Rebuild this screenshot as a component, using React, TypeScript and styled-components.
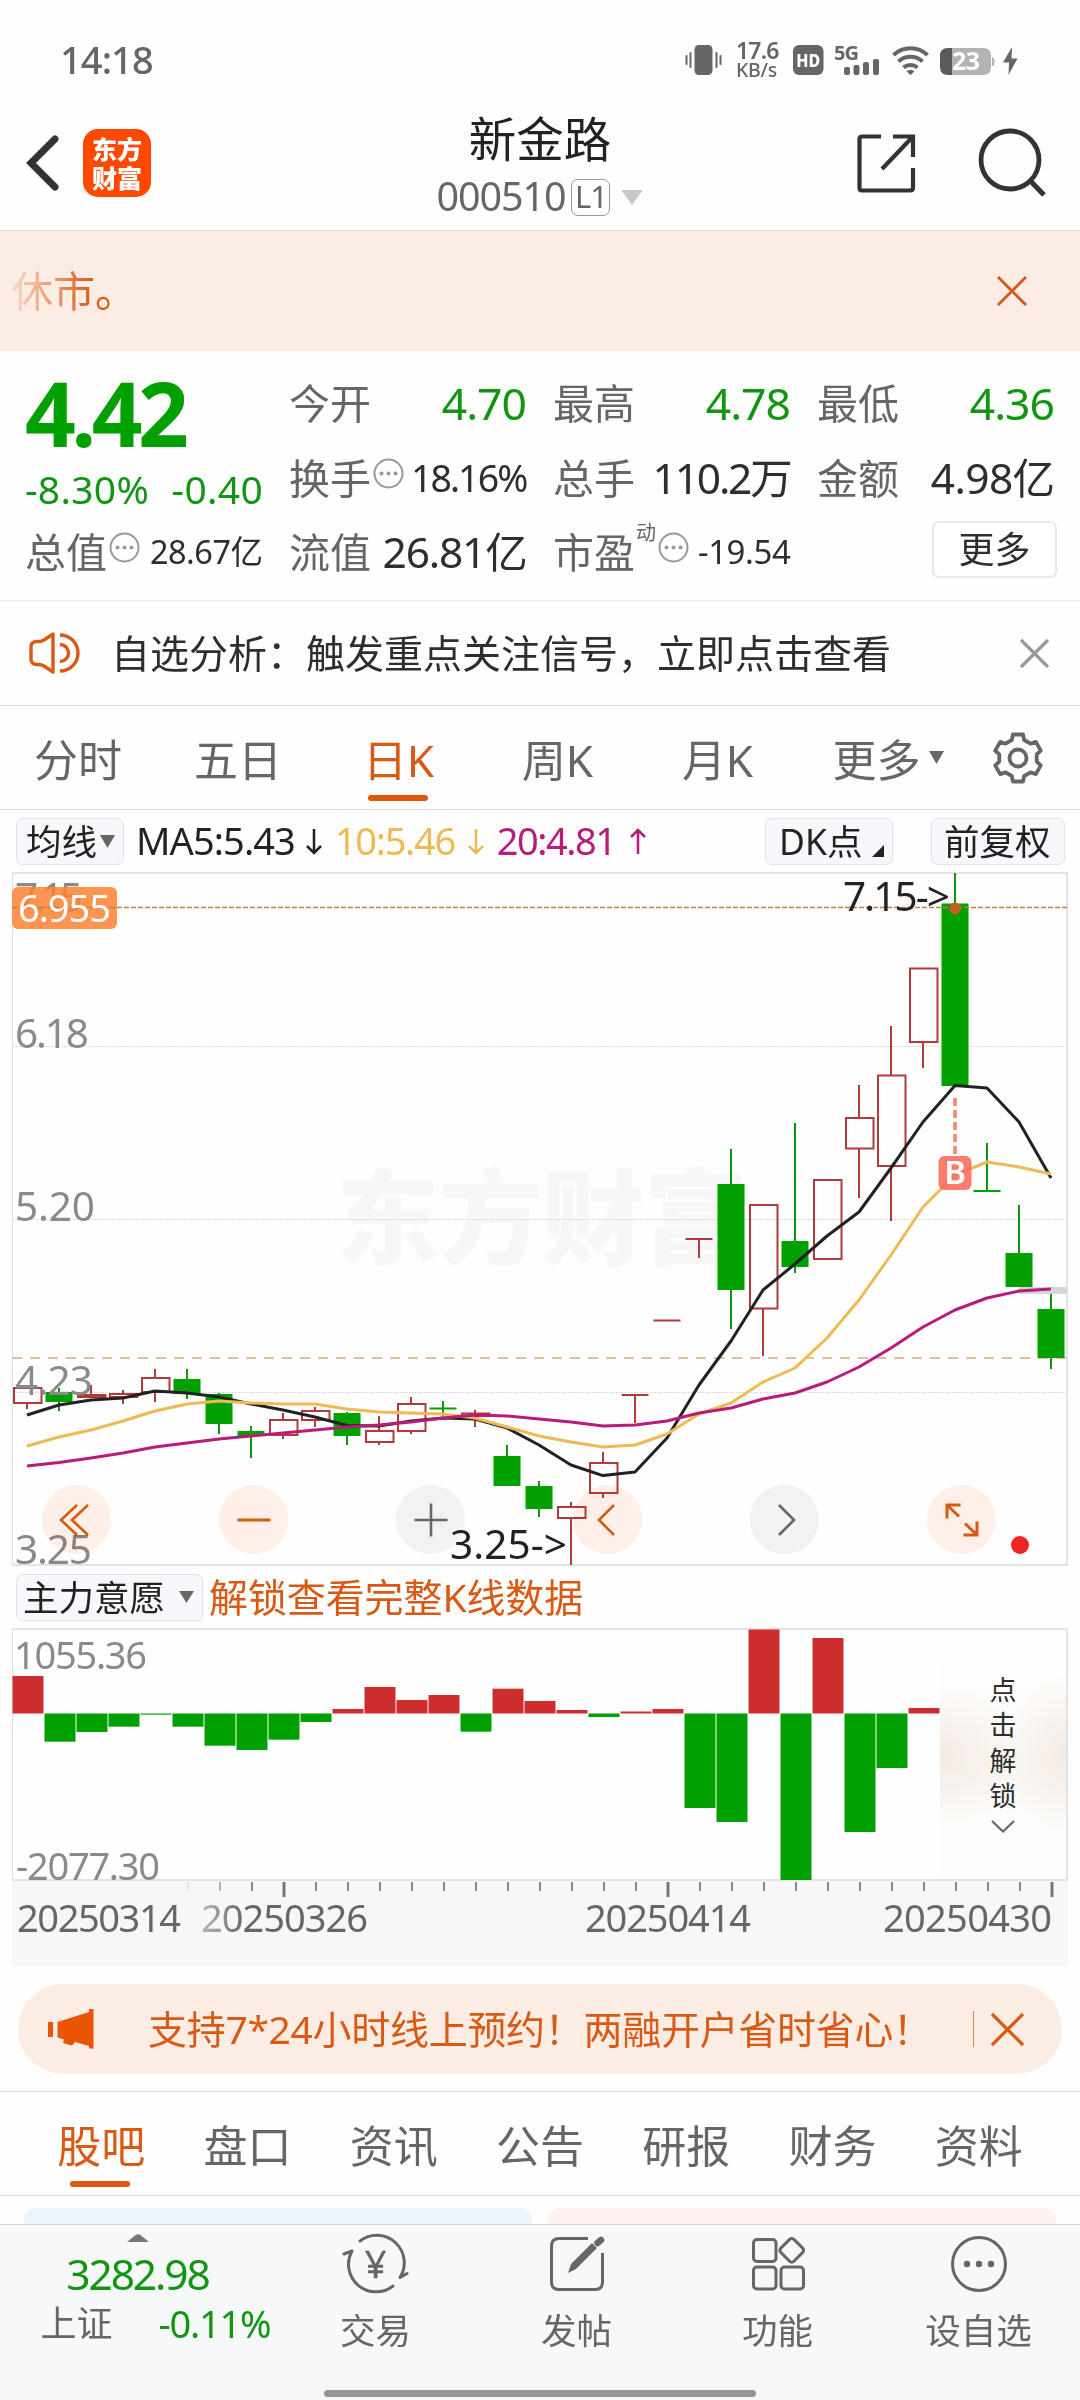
import React from "react";
import styled, { createGlobalStyle } from "styled-components";

const SANS = `"Noto Sans", "Noto Sans CJK SC", sans-serif`;
const C = {
  ink: "#2e2e2e",
  gray: "#666",
  light: "#8a8a8a",
  green: "#129612",
  candle: "#00a000",
  red: "#b23a3a",
  bar: "#ce2d2d",
  orange: "#d85a14",
  peach: "#fcede4",
  line: "#d9d9d9",
  ma5: "#222",
  ma10: "#efb954",
  ma20: "#b81c78",
};

const Global = createGlobalStyle`
  * { box-sizing: border-box; }
  body { margin: 0; background: #fff; }
`;

const Page = styled.div`
  width: 1080px;
  height: 2400px;
  overflow: hidden;
  display: flex;
  flex-direction: column;
  background: #fefefe;
  font-family: ${SANS};
  color: ${C.ink};
  white-space: nowrap;
`;

const Txt = styled.span<{ $s: number; $c?: string; $t?: number; $w?: number; $ml?: number }>`
  font-size: ${(p) => p.$s}px;
  line-height: 1.2;
  color: ${(p) => p.$c ?? C.ink};
  letter-spacing: ${(p) => p.$t ?? 0}px;
  font-weight: ${(p) => p.$w ?? 400};
  margin-left: ${(p) => p.$ml ?? 0}px;
`;

const Icon = styled.svg<{ $ml?: number; $mt?: number }>`
  display: block;
  flex: none;
  overflow: visible;
  margin-left: ${(p) => p.$ml ?? 0}px;
  margin-top: ${(p) => p.$mt ?? 0}px;
  fill: none;
`;

/* ---------- status bar ---------- */
const StatusBar = styled.div`
  height: 80px;
  flex: none;
  padding: 40px 62px 0 60px;
  display: flex;
  align-items: center;
  justify-content: space-between;
`;
const StatusIcons = styled.div`
  display: flex;
  align-items: center;
  height: 40px;
`;
const Speed = styled.div`
  display: flex;
  flex-direction: column;
  width: 57px;
  padding-left: 14px;
  color: ${C.gray};
  font-size: 23px;
  line-height: 19px;
  font-weight: 600;
  letter-spacing: -0.8px;
  small {
    font-size: 19.5px;
    font-weight: 500;
    letter-spacing: -0.3px;
  }
`;

/* ---------- header ---------- */
const Header = styled.header`
  height: 151px;
  flex: none;
  padding-top: 16px;
  border-bottom: 1px solid ${C.line};
  display: grid;
  grid-template-columns: 1fr auto 1fr;
  align-items: center;
`;
const HeaderSide = styled.div<{ $end?: boolean }>`
  display: flex;
  align-items: center;
  justify-content: ${(p) => (p.$end ? "flex-end" : "flex-start")};
  padding: ${(p) => (p.$end ? "0 32px 0 0" : "0 0 0 26px")};
`;
const Logo = styled.div`
  width: 68px;
  height: 68px;
  margin-left: 23px;
  border-radius: 15px;
  background: #ff4800;
  color: #fff;
  font: 900 25px/29px "Noto Sans CJK SC", sans-serif;
  display: flex;
  flex-direction: column;
  align-items: center;
  justify-content: center;
`;
const TitleBlock = styled.div`
  display: flex;
  flex-direction: column;
  align-items: center;
  gap: 12px;
`;
const Title = styled.div`
  font-size: 47.5px;
  line-height: 56px;
  color: #222;
`;
const CodeRow = styled.div`
  display: flex;
  align-items: center;
  height: 37px;
`;
const Level = styled.span`
  width: 39px;
  height: 37px;
  margin: 0 11px 0 6px;
  border: 1.5px solid #999;
  border-radius: 7px;
  color: ${C.gray};
  font-size: 31px;
  line-height: 33px;
  letter-spacing: -1px;
  text-align: center;
`;

/* ---------- banner ---------- */
const Banner = styled.div`
  height: 120px;
  flex: none;
  background: ${C.peach};
  display: flex;
  align-items: center;
  justify-content: space-between;
  padding: 0 53px 0 11px;
`;
const FadingText = styled.span`
  font-size: 42px;
  line-height: 60px;
  background: linear-gradient(90deg, rgba(216, 90, 20, 0.12) 0, #d85a14 84px);
  background-clip: text;
  -webkit-background-clip: text;
  color: transparent;
`;

/* ---------- quote ---------- */
const Quote = styled.section`
  height: 250px;
  flex: none;
  padding: 15px 25px 0;
  border-bottom: 1px solid #ebebeb;
  display: grid;
  grid-template-columns: repeat(4, 238px);
  grid-template-rows: repeat(3, 74.5px);
  column-gap: 26px;
`;
const PriceCell = styled.div`
  grid-row: span 2;
  display: flex;
  flex-direction: column;
`;
const Price = styled.div`
  font-size: 89px;
  font-weight: 700;
  line-height: 93px;
  letter-spacing: -4.6px;
  color: #00a000;
`;
const ChangeRow = styled.div`
  display: flex;
  justify-content: space-between;
  padding-top: 7px;
`;
const Cell = styled.div`
  display: flex;
  align-items: center;
`;
const Label = styled.span`
  font-size: 41px;
  line-height: 50px;
  color: ${C.gray};
`;
const Value = styled.span<{ $s: number; $t: number; $c?: string }>`
  margin-left: auto;
  font-size: ${(p) => p.$s}px;
  line-height: 50px;
  letter-spacing: ${(p) => p.$t}px;
  margin-right: ${(p) => (p.$s > 44 ? 1 : 0.5)}px;
  color: ${(p) => p.$c ?? C.ink};
`;
const Sup = styled.span`
  font-size: 20px;
  line-height: 24px;
  color: ${C.gray};
  align-self: flex-start;
  margin: 6px 0 0 1px;
`;
const MoreButton = styled.button`
  width: 125px;
  height: 57px;
  margin-left: auto;
  margin-right: -2px;
  margin-top: -5px;
  border: 2px solid #e6e8ea;
  border-radius: 7px;
  background: #fff;
  color: ${C.ink};
  font: 36px/48px ${SANS};
  padding: 0;
`;

const Tip = styled.section`
  height: 105px;
  flex: none;
  border-bottom: 1px solid ${C.line};
  display: flex;
  align-items: center;
  padding: 0 31px 0 29px;
`;
const Push = styled.div`
  margin-left: auto;
`;

/* ---------- tabs ---------- */
const PeriodTabs = styled.nav`
  height: 104px;
  flex: none;
  border-bottom: 1px solid ${C.line};
  display: flex;
  align-items: center;
`;
const Tab = styled.div<{ $w: number; $on?: boolean; $shift?: number }>`
  width: ${(p) => p.$w}px;
  height: 100%;
  position: relative;
  display: flex;
  align-items: center;
  justify-content: center;
  padding-right: ${(p) => p.$shift ?? 0}px;
  font-size: 44px;
  color: ${(p) => (p.$on ? C.orange : C.gray)};
  &::after {
    content: "";
    display: ${(p) => (p.$on ? "block" : "none")};
    position: absolute;
    bottom: 8px;
    left: calc(50% - 31px);
    width: 60px;
    height: 6px;
    border-radius: 3px;
    background: #e0580f;
  }
`;

/* ---------- indicator rows ---------- */
const Row = styled.div`
  height: 62px;
  flex: none;
  display: flex;
  align-items: center;
  padding: 0 15px 0 16px;
`;
const Chip = styled.div<{ $w: number; $pl?: number }>`
  width: ${(p) => p.$w}px;
  height: 47px;
  flex: none;
  padding-left: ${(p) => p.$pl ?? 9}px;
  display: flex;
  align-items: center;
  border: 1.5px solid #dfe2e6;
  border-radius: 7px;
  background: #f7f8fb;
  font-size: 35.5px;
  line-height: 42px;
  color: #222;
`;
const ChipGroup = styled.div`
  margin-left: auto;
  display: flex;
  gap: 38px;
`;

/* ---------- chart ---------- */
const ChartBox = styled.div`
  position: relative;
  flex: none;
  svg {
    display: block;
  }
`;
const Controls = styled.div`
  position: absolute;
  left: 42px;
  top: 613px;
  display: flex;
  gap: 108px;
`;
const Round = styled.div<{ $off?: boolean }>`
  width: 69px;
  height: 69px;
  border-radius: 50%;
  display: flex;
  align-items: center;
  justify-content: center;
  background: ${(p) => (p.$off ? "#f3f3f3" : "#fff1e9")};
  mix-blend-mode: multiply;
`;
const Unlock = styled.div`
  position: absolute;
  left: 940px;
  top: 3px;
  width: 126px;
  height: 248px;
  padding-top: 41px;
  display: flex;
  flex-direction: column;
  align-items: center;
  font-size: 27px;
  line-height: 35.3px;
  color: ${C.ink};
  background: radial-gradient(ellipse 80px 70px at 0 50%, #f5ebe5 0, rgba(245, 235, 229, 0) 100%),
    radial-gradient(ellipse 60px 80px at 100% 50%, #f5ebe5 0, rgba(245, 235, 229, 0) 100%),
    linear-gradient(#fefefe, #fdfcfa 30%, #f9f7f3 55%, #fcfcfa 75%, #fcfcfc);
`;

/* ---------- promo, info tabs, cards ---------- */
const Promo = styled.div`
  height: 90px;
  flex: none;
  margin: 18px 18px 17px;
  padding: 0 38px 0 30px;
  border-radius: 45px;
  background: ${C.peach};
  display: flex;
  align-items: center;
`;
const Divider = styled.div`
  width: 1.5px;
  height: 36px;
  margin: 0 17px 0 auto;
  background: #d88350;
`;
const InfoTabs = styled.nav`
  height: 105px;
  flex: none;
  padding: 0 28px;
  border-top: 1px solid ${C.line};
  border-bottom: 1px solid ${C.line};
  display: flex;
`;
const Cards = styled.div`
  height: 28px;
  flex: none;
  padding: 12px 24px 0;
  display: flex;
  gap: 16px;
`;
const Card = styled.div<{ $c: string }>`
  flex: 1;
  border-radius: 12px 12px 0 0;
  background: ${(p) => p.$c};
`;

/* ---------- bottom bar ---------- */
const Bottom = styled.footer`
  height: 176px;
  flex: none;
  border-top: 1px solid #d3d6da;
  background: #f7f8fa;
  display: flex;
  flex-direction: column;
`;
const BottomRow = styled.div`
  display: flex;
  height: 165px;
`;
const IndexBlock = styled.div`
  width: 275px;
  padding-top: 9px;
  display: flex;
  flex-direction: column;
  align-items: center;
`;
const IndexValue = styled.div`
  margin-top: 7px;
  font-size: 42.5px;
  line-height: 50px;
  letter-spacing: -2.1px;
  color: ${C.green};
`;
const IndexLine = styled.div`
  width: 230px;
  margin: 2px 0 0 36px;
  display: flex;
  justify-content: space-between;
  align-items: center;
`;
const NavItem = styled.div`
  width: 201px;
  padding-top: 8px;
  display: flex;
  flex-direction: column;
  align-items: center;
  font-size: 35.5px;
  line-height: 44px;
  color: ${C.gray};
  gap: 13px;
`;
const HomeBar = styled.div`
  width: 432px;
  height: 7px;
  border-radius: 4px;
  background: #959595;
  align-self: center;
`;

const Cross = ({ s, c, w }: { s: number; c: string; w: number }) => (
  <Icon width={s} height={s} viewBox={`0 0 ${s} ${s}`} stroke={c} strokeWidth={w}>
    <path d={`M1 1L${s - 1} ${s - 1}M${s - 1} 1L1 ${s - 1}`} />
  </Icon>
);
const Down = ({ w, h, c, ml }: { w: number; h: number; c: string; ml?: number }) => (
  <Icon width={w} height={h} viewBox={`0 0 ${w} ${h}`} $ml={ml}>
    <path d={`M0 0H${w}L${w / 2} ${h}Z`} fill={c} />
  </Icon>
);
const Arrow = ({ c, up, ml }: { c: string; up?: boolean; ml: number }) => (
  <Icon width={16} height={27} viewBox="0 0 16 27" stroke={c} strokeWidth={2.5} $ml={ml}>
    <path d={up ? "M8 26V2M1 9L8 2L15 9" : "M8 1V25M1 18L8 25L15 18"} />
  </Icon>
);
const Hint = ({ ml }: { ml: number }) => (
  <Icon width={31} height={31} viewBox="0 0 31 31" $ml={ml} $mt={-9}>
    <circle cx="15.5" cy="15.5" r="14" stroke="#999" strokeWidth="2" />
    {[8.5, 15.5, 22.5].map((x) => (
      <circle key={x} cx={x} cy="15.5" r="2" fill="#999" />
    ))}
  </Icon>
);

const gearPath = (() => {
  const pts: string[] = [];
  for (let k = 0; k < 6; k++) {
    const a = -90 + 60 * k;
    [
      [19, -19],
      [24, -12],
      [24, 12],
      [19, 19],
    ].forEach(([r, d]) => {
      const t = ((a + d) * Math.PI) / 180;
      pts.push(`${(27 + r * Math.cos(t)).toFixed(1)} ${(27 + r * Math.sin(t)).toFixed(1)}`);
    });
  }
  return `M${pts.join("L")}Z`;
})();

/* kind, high, body top, body bottom, low */
type Candle = ["r" | "g", number, number, number, number];
const candles: Candle[] = [
  ["r", 1385, 1388, 1403, 1409],
  ["g", 1388, 1392, 1402, 1411],
  ["r", 1385, 1395, 1397, 1398],
  ["r", 1390, 1394, 1397, 1404],
  ["r", 1369, 1378, 1392, 1402],
  ["g", 1369, 1379, 1394, 1399],
  ["g", 1393, 1394, 1424, 1434],
  ["g", 1426, 1431, 1436, 1458],
  ["r", 1413, 1420, 1435, 1439],
  ["r", 1407, 1411, 1420, 1427],
  ["g", 1412, 1413, 1436, 1445],
  ["r", 1416, 1431, 1442, 1445],
  ["r", 1397, 1404, 1431, 1434],
  ["g", 1401, 1407.5, 1409.5, 1416],
  ["r", 1410, 1413.5, 1416, 1427],
  ["g", 1445, 1456, 1486, 1486],
  ["g", 1481, 1486, 1509, 1517],
  ["r", 1502, 1507, 1518, 1565],
  ["r", 1452, 1463, 1493, 1498],
  ["r", 1395, 1395, 1395, 1423],
  ["r", 1320.5, 1320.5, 1320.5, 1320.5],
  ["r", 1239, 1239, 1239, 1258],
  ["g", 1149, 1184, 1290, 1329],
  ["r", 1205, 1205, 1308.5, 1356],
  ["g", 1123, 1241, 1267, 1273],
  ["r", 1180, 1180, 1259, 1259],
  ["r", 1085, 1118, 1148.5, 1198],
  ["r", 1026, 1075.5, 1166, 1221],
  ["r", 968.5, 968.5, 1042, 1068],
  ["g", 873, 903.5, 1086, 1086],
  ["g", 1143, 1190, 1192, 1192],
  ["g", 1205, 1253, 1287, 1287],
  ["g", 1294, 1309, 1358, 1369],
];
const ma5 = [1415, 1405, 1400, 1398, 1391, 1393, 1397, 1404, 1410, 1417, 1425.5, 1426, 1421, 1418, 1419, 1428, 1445, 1465, 1475.6, 1472, 1438, 1385, 1341, 1290, 1264, 1236, 1212, 1168, 1122, 1085.5, 1088, 1122, 1178];
const ma10 = [1446, 1437, 1430, 1421, 1411, 1404, 1401, 1403, 1404, 1404, 1409, 1412, 1413, 1414, 1418, 1427, 1436, 1442, 1447, 1445, 1434, 1414, 1403, 1382, 1368, 1338, 1300, 1255, 1207, 1175, 1162, 1167, 1174];
const ma20 = [1466, 1462.5, 1458, 1453, 1447, 1443, 1439, 1436, 1433, 1430, 1427, 1425, 1422, 1418, 1415, 1416, 1419, 1422, 1426, 1425, 1421, 1413, 1408, 1399, 1393, 1382, 1367, 1348, 1327, 1310, 1298, 1291, 1289];
const volume = [1676, 1741.7, 1732, 1726.7, 1714.7, 1726.7, 1745.7, 1750, 1739.7, 1722, 1709, 1687, 1700, 1695, 1731.7, 1688.7, 1701, 1710, 1717, 1711.5, 1709, 1808, 1822, 1629.5, 1880, 1638, 1832, 1768, 1708];
const cx = (i: number) => 27 + 32 * i;
const line = (v: number[]) => v.map((y, i) => `${cx(i)},${y}`).join(" ");

const CandleMark = ({ d, i }: { d: Candle; i: number }) => {
  const [k, hi, top, bot, lo] = d;
  const x = cx(i);
  if (k === "g")
    return (
      <g>
        <path d={`M${x} ${hi}V${lo}`} stroke="#0c960c" strokeWidth="2" />
        <rect x={x - 13.5} y={top} width="27" height={bot - top} fill={C.candle} />
      </g>
    );
  if (top === bot) return <path d={`M${x - 13.5} ${top}H${x + 13.5}M${x} ${top}V${lo}`} stroke={C.red} strokeWidth="2" />;
  return (
    <g stroke={C.red} strokeWidth="2" fill="none">
      <path d={`M${x} ${hi}V${top}M${x} ${bot}V${lo}`} />
      <rect x={x - 13} y={top} width="27.5" height={bot - top} />
    </g>
  );
};

const MainChart = () => (
  <svg width="1080" height="694" viewBox="0 872 1080 694" fontFamily={SANS}>
    <text x="336" y="1257" fontSize="104" fontWeight="900" fill="#f7f7f7" textLength="412">东方财富</text>
    <g stroke="#d0d0d0" strokeWidth="1" strokeDasharray="1.5 1.5">
      <path d="M13 1046.5H1067M13 1219.5H1067M13 1392.5H1067" />
    </g>
    <path d="M12.5 873V1565" stroke="#e0e0e0" />
    <path d="M12 873H1067V1565H12" fill="none" stroke="#e3e3e3" strokeWidth="2" />
    <path d="M12 1358H1067" stroke="#dfbf9f" strokeWidth="2" strokeDasharray="10 8" />
    <rect x="1019" y="1287" width="48" height="7" fill="#d3d8dd" />
    {candles.map((d, i) => (
      <CandleMark key={i} d={d} i={i} />
    ))}
    <g fill="none" strokeWidth="3" strokeLinejoin="round">
      <polyline points={line(ma5)} stroke={C.ma5} />
      <polyline points={line(ma10)} stroke={C.ma10} />
      <polyline points={line(ma20)} stroke={C.ma20} />
    </g>
    <path d="M955 1098V1154" stroke="#ee8472" strokeWidth="3.5" strokeDasharray="8 4" />
    <rect x="938.5" y="1156" width="33" height="34" rx="6" fill="#fa6a58" fillOpacity="0.87" />
    <text x="955" y="1184" fontSize="33" fontWeight="600" fill="#fff" textAnchor="middle">B</text>
    <g fontSize="40.5" fill={C.light}>
      <text x="15" y="912" textLength="68">7.15</text>
      <text x="15" y="1048" textLength="74">6.18</text>
      <text x="15" y="1221" textLength="80">5.20</text>
      <text x="15" y="1394.500" textLength="78">4.23</text>
      <text x="15" y="1563.500" textLength="77">3.25</text>
    </g>
    <rect x="12" y="887" width="105" height="42" rx="6" fill="#ff8234" fillOpacity="0.86" />
    <path d="M12 907.5H1067" stroke="#c47c48" strokeWidth="1.5" strokeDasharray="5 2" />
    <text x="18" y="921.500" fontSize="38" fill="#fff" textLength="93">6.955</text>
    <circle cx="955" cy="908.5" r="6" fill="#bd5f22" />
    <g fontSize="40.5" fill="#222">
      <text x="843" y="911" textLength="107">7.15-&gt;</text>
      <text x="450" y="1558.500" textLength="117">3.25-&gt;</text>
    </g>
    <ellipse cx="1020" cy="1545" rx="9" ry="9" fill="#f02424" />
  </svg>
);

const SubChart = () => (
  <svg width="1080" height="338" viewBox="0 1628 1080 338" fontFamily={SANS}>
    <defs>
      <linearGradient id="fade" gradientUnits="userSpaceOnUse" x1="190" x2="245" y1="0" y2="0">
        <stop offset="0" stopColor="#ccc" />
        <stop offset="1" stopColor={C.gray} />
      </linearGradient>
    </defs>
    <rect x="12" y="1881" width="1056" height="85" fill="#f7f7fa" />
    <path d="M12.5 1629V1880" stroke="#e0e0e0" />
    <path d="M12 1629H1067V1880H12" fill="none" stroke="#e3e3e3" strokeWidth="2" />
    {volume.map((y, i) => (
      <rect key={i} x={12.5 + 32 * i} y={Math.min(y, 1713.5)} width="31" height={Math.abs(y - 1713.5)} fill={y < 1713.5 ? C.bar : C.candle} />
    ))}
    <g fontSize="38" fill={C.light}>
      <text x="14" y="1668.500" textLength="133">1055.36</text>
      <text x="16" y="1879.500" textLength="144">-2077.30</text>
    </g>
    {Array.from({ length: 28 }, (_, k) => k + 5).map((i) => {
      const long = i % 12 === 8;
      return (
        <path
          key={i}
          d={`M${28 + 32 * i} 1882V${long ? 1897 : 1891}`}
          stroke={long ? "#777" : "#888"}
          strokeWidth={long ? 3 : 2}
          opacity={i === 5 ? 0.15 : i === 6 ? 0.6 : 1}
        />
      );
    })}
    <g fontSize="38" fill={C.gray}>
      <text x="17" y="1931.500" textLength="164">20250314</text>
      <text x="201" y="1931.500" textLength="167" fill="url(#fade)">20250326</text>
      <text x="585" y="1931.500" textLength="166">20250414</text>
      <text x="883" y="1931.500" textLength="169">20250430</text>
    </g>
  </svg>
);

const CtlIcon = ({ d, c, w = 2.6 }: { d: string; c: string; w?: number }) => (
  <Icon width={40} height={40} viewBox="-20 -20 40 40" stroke={c} strokeWidth={w}>
    <path d={d} />
  </Icon>
);

const infoTabs = ["股吧", "盘口", "资讯", "公告", "研报", "财务", "资料"];

export default function App() {
  return (
    <Page>
      <Global />
      <StatusBar>
        <Txt $s={38} $c={C.gray} $w={500} $t={-0.9}>14:18</Txt>
        <StatusIcons>
          <Icon width={37} height={32} viewBox="0 0 37 32" stroke={C.gray} strokeWidth="2" strokeLinecap="round">
            <rect x="9.5" y="1" width="18" height="30" rx="4.5" fill={C.gray} stroke="none" />
            <path d="M1.5 12V20M5.5 9V23M31.5 9V23M35.5 12V20" />
          </Icon>
          <Speed>
            17.6<small>KB/s</small>
          </Speed>
          <Icon width={31} height={30} viewBox="0 0 31 30" $ml={14}>
            <rect width="30.5" height="30" rx="6" fill={C.gray} />
            <text x="15.3" y="21.500" fontSize="18" fontWeight="800" fill="#fff" textAnchor="middle" textLength="24" lengthAdjust="spacingAndGlyphs" fontFamily={SANS}>HD</text>
          </Icon>
          <Icon width={46} height={32} viewBox="0 0 46 32" $ml={10}>
            <text x="0" y="16" fontSize="20" fontWeight="700" fill={C.gray} textLength="25" fontFamily={SANS}>5G</text>
            <g fill={C.gray}>
              <rect x="10" y="23" width="6" height="8" rx="2" />
              <rect x="19.5" y="21" width="6" height="10" rx="2" />
              <rect x="29" y="18" width="6" height="13" rx="2" />
              <rect x="39" y="15" width="6" height="16" rx="2" />
            </g>
          </Icon>
          <Icon width={37} height={31} viewBox="0 0 37 31" stroke={C.gray} strokeWidth="4" $ml={12}>
            <path d="M1.5 10A24.5 24.5 0 0 1 35.5 10M6.5 16.5A17.5 17.5 0 0 1 30.5 16.5M11.5 22.5A11 11 0 0 1 25.5 22.5" />
            <path d="M18.5 30L14.5 26.2A6 6 0 0 1 22.5 26.2Z" fill={C.gray} stroke="none" />
          </Icon>
          <Icon width={55} height={27} viewBox="0 0 55 27" $ml={11} $mt={3}>
            <path d="M8 0H43Q51 0 51 8V19Q51 27 43 27H8Z" fill="#b3b3b3" />
            <path d="M52 9Q54.5 9 54.5 13.5T52 18Z" fill="#b3b3b3" />
            <path d="M12 0V27H8Q0 27 0 19V8Q0 0 8 0Z" fill="#5a5a5a" />
            <text x="26" y="22" fontSize="25" fontWeight="700" fill="#fff" textAnchor="middle" textLength="28" fontFamily={SANS}>23</text>
          </Icon>
          <Icon width={15} height={28} viewBox="0 0 15 28" $ml={8} $mt={2}>
            <path d="M9 0L0 15.5H6L5.5 28L14.5 11.5H8.5Z" fill={C.gray} />
          </Icon>
        </StatusIcons>
      </StatusBar>

      <Header>
        <HeaderSide>
          <Icon width={34} height={58} viewBox="0 0 34 58" stroke="#333" strokeWidth="7" strokeLinecap="round">
            <path d="M29 5L5 29L29 53" />
          </Icon>
          <Logo>
            <span>东方</span>
            <span>财富</span>
          </Logo>
        </HeaderSide>
        <TitleBlock>
          <Title>新金路</Title>
          <CodeRow>
            <Txt $s={39.5} $c={C.gray} $t={-1.1}>000510</Txt>
            <Level>L1</Level>
            <Down w={22} h={15} c="#c9c9c9" />
          </CodeRow>
        </TitleBlock>
        <HeaderSide $end>
          <Icon width={59} height={59} viewBox="0 0 59 59" stroke="#333" strokeWidth="4.2">
            <path d="M24 2.5H5Q2.5 2.5 2.5 5V54Q2.5 56.5 5 56.5H53Q56 56.5 56 54V34M36 2.5H56V23M56 2.5L25 35" />
          </Icon>
          <Icon width={70} height={70} viewBox="0 0 70 70" stroke="#333" strokeWidth="4.8" $ml={62}>
            <circle cx="32" cy="32" r="29" />
            <path d="M52.5 53L66 67" strokeWidth="5" />
          </Icon>
        </HeaderSide>
      </Header>

      <Banner>
        <FadingText>休市。</FadingText>
        <Cross s={30} c="#d0581f" w={2.8} />
      </Banner>

      <Quote>
        <PriceCell>
          <Price>4.42</Price>
          <ChangeRow>
            <Txt $s={39} $c={C.green} $t={0.3}>-8.30%</Txt>
            <Txt $s={39} $c={C.green} $t={0.3}>-0.40</Txt>
          </ChangeRow>
        </PriceCell>
        <Cell><Label>今开</Label><Value $s={44.5} $t={-1} $c={C.green}>4.70</Value></Cell>
        <Cell><Label>最高</Label><Value $s={44.5} $t={-1} $c={C.green}>4.78</Value></Cell>
        <Cell><Label>最低</Label><Value $s={44.5} $t={-1} $c={C.green}>4.36</Value></Cell>
        <Cell><Label>换手</Label><Hint ml={2} /><Value $s={37.5} $t={-1.9}>18.16%</Value></Cell>
        <Cell><Label>总手</Label><Value $s={42.5} $t={-2.2}>110.2万</Value></Cell>
        <Cell><Label>金额</Label><Value $s={42.5} $t={-0.6}>4.98亿</Value></Cell>
        <Cell><Label>总值</Label><Hint ml={2} /><Value $s={32.5} $t={-0.5}>28.67亿</Value></Cell>
        <Cell><Label>流值</Label><Value $s={42.5} $t={-1.2}>26.81亿</Value></Cell>
        <Cell><Label>市盈</Label><Sup>动</Sup><Hint ml={2} /><Value $s={33} $t={-0.4}>-19.54</Value></Cell>
        <Cell><MoreButton>更多</MoreButton></Cell>
      </Quote>

      <Tip>
        <Icon width={51} height={42} viewBox="0 0 51 42" stroke={C.orange} strokeWidth="3.4" strokeLinejoin="round">
          <path d="M24 2L15 8Q12.5 9.5 10 9.5H8Q2 9.5 2 15V27Q2 32.5 8 32.5H10Q12.5 32.5 15 34L24 40Z" />
          <path d="M31 3A18 18 0 0 1 31 39M31 12.5A8.5 8.5 0 0 1 31 29.5" />
        </Icon>
        <Txt $s={39} $ml={31}>自选分析：触发重点关注信号，立即点击查看</Txt>
        <Push><Cross s={29} c="#999" w={3.2} /></Push>
      </Tip>

      <PeriodTabs>
        <Tab $w={160} $shift={4}>分时</Tab>
        <Tab $w={160} $shift={4}>五日</Tab>
        <Tab $w={158} $shift={1} $on>日K</Tab>
        <Tab $w={160} $shift={1}>周K</Tab>
        <Tab $w={160} $shift={1}>月K</Tab>
        <Tab $w={180}>更多<Down w={15} h={13} c={C.gray} ml={8} /></Tab>
        <Icon width={54} height={54} viewBox="0 0 54 54" stroke={C.gray} strokeWidth="3.8" $ml={13}>
          <path d={gearPath} strokeLinejoin="round" />
          <circle cx="27" cy="27" r="8.5" />
        </Icon>
      </PeriodTabs>

      <Row>
        <Chip $w={108}>均线<Down w={15} h={13} c={C.gray} ml={3} /></Chip>
        <Txt $s={38} $c="#222" $t={-0.9} $ml={12}>MA5:5.43</Txt>
        <Arrow c="#222" ml={11} />
        <Txt $s={38} $c={C.ma10} $t={-1.3} $ml={13}>10:5.46</Txt>
        <Arrow c={C.ma10} ml={13} />
        <Txt $s={38} $c={C.ma20} $t={-1.5} $ml={13}>20:4.81</Txt>
        <Arrow c={C.ma20} up ml={15} />
        <ChipGroup>
          <Chip $w={128} $pl={13}>
            DK点
            <Icon width={12} height={12} viewBox="0 0 12 12" $ml={10} $mt={20}>
              <path d="M12 0V12H0Z" fill="#222" />
            </Icon>
          </Chip>
          <Chip $w={134} $pl={12}>前复权</Chip>
        </ChipGroup>
      </Row>

      <ChartBox>
        <MainChart />
        <Controls>
          <Round><CtlIcon c={C.orange} d="M0 -15L-16 0L0 15M11 -15L-5 0L11 15" /></Round>
          <Round><CtlIcon c={C.orange} d="M-16.5 0H16.5" w={3} /></Round>
          <Round $off><CtlIcon c="#666" d="M-16.5 0H16.5M0 -16.5V16.5" /></Round>
          <Round><CtlIcon c={C.orange} d="M6 -15L-9 0L6 15" /></Round>
          <Round $off><CtlIcon c="#666" d="M-6 -15L9 0L-6 15" /></Round>
          <Round><CtlIcon c={C.orange} w={3} d="M-15 -1.5V-15H-1.5M-15 -15L-3 -3.5M15 1.5V15H1.5M15 15L3 3.5" /></Round>
        </Controls>
      </ChartBox>

      <Row>
        <Chip $w={187} $pl={6}>主力意愿<Down w={15} h={12} c={C.gray} ml={14} /></Chip>
        <Txt $s={39} $c={C.orange} $ml={6} $t={-0.1}>解锁查看完整K线数据</Txt>
      </Row>

      <ChartBox>
        <SubChart />
        <Unlock>
          <span>点</span>
          <span>击</span>
          <span>解</span>
          <span>锁</span>
          <Icon width={24} height={13} viewBox="0 0 24 13" stroke={C.gray} strokeWidth="2.2" $mt={7}>
            <path d="M1 1L12 11.5L23 1" />
          </Icon>
        </Unlock>
      </ChartBox>

      <Promo>
        <Icon width={46} height={40} viewBox="0 0 46 40">
          <path d="M0 13H5V28H0ZM9.5 13L41 3V0H45.5V39.5H41V37L27 33L24 36.5L15 34L16 30.5L9.5 28.5Z" fill="#e95504" />
        </Icon>
        <Txt $s={39} $c={C.orange} $ml={54} $t={-0.3}>支持7*24小时线上预约！两融开户省时省心！</Txt>
        <Divider />
        <Cross s={33} c={C.orange} w={3.2} />
      </Promo>

      <InfoTabs>
        {infoTabs.map((t, i) => (
          <Tab key={t} $w={146.3} $on={i === 0}>{t}</Tab>
        ))}
      </InfoTabs>

      <Cards>
        <Card $c="#ecf4fc" />
        <Card $c="#fdf2f1" />
      </Cards>

      <Bottom>
        <BottomRow>
          <IndexBlock>
            <Icon width={22} height={8} viewBox="0 0 22 8"><path d="M0 8L9 .8Q11 -.5 13 .8L22 8Z" fill="#777" /></Icon>
            <IndexValue>3282.98</IndexValue>
            <IndexLine>
              <Txt $s={36} $c={C.gray}>上证</Txt>
              <Txt $s={38} $c={C.green} $t={-1.2}>-0.11%</Txt>
            </IndexLine>
          </IndexBlock>
          <NavItem>
            <Icon width={68} height={62} viewBox="342 2233 68 62" stroke={C.gray} strokeWidth="3" strokeLinejoin="round" strokeLinecap="round">
              <path d="M360 2241A27.5 27.5 0 0 1 400 2277.5L407 2273.5M393 2286A27.5 27.5 0 0 1 352 2251L344 2254" />
              <text x="375.5" y="2278" fontSize="38" fill={C.gray} stroke={C.gray} strokeWidth=".4" textAnchor="middle" fontFamily={SANS}>¥</text>
            </Icon>
            交易
          </NavItem>
          <NavItem>
            <Icon width={58} height={62} viewBox="548 2233 58 62" stroke={C.gray} strokeWidth="3">
              <path d="M588 2238.5H559Q551.5 2238.5 551.5 2246V2282Q551.5 2289.5 559 2289.5H595Q602.5 2289.5 602.5 2282V2253" />
              <path d="M568 2273L571 2264L592 2243L597 2248L576 2269Z" fill={C.gray} stroke="none" />
              <path d="M597.5 2243L601 2240" strokeWidth="6.5" strokeLinecap="round" />
            </Icon>
            发帖
          </NavItem>
          <NavItem>
            <Icon width={58} height={62} viewBox="749 2233 58 62" stroke={C.gray} strokeWidth="3">
              <rect x="753.5" y="2239.5" width="22.5" height="22" rx="3.5" />
              <rect x="753.5" y="2267" width="22.5" height="22" rx="3.5" />
              <rect x="781" y="2267" width="22.5" height="22" rx="3.5" />
              <rect x="782.5" y="2241" width="18.5" height="18.5" rx="3" transform="rotate(45 791.7 2250.3)" />
            </Icon>
            功能
          </NavItem>
          <NavItem>
            <Icon width={62} height={62} viewBox="948 2233 62 62">
              <circle cx="979" cy="2264" r="26.5" stroke={C.gray} strokeWidth="3" />
              {[967, 979, 991].map((x) => (
                <circle key={x} cx={x} cy="2264" r="3.2" fill={C.gray} />
              ))}
            </Icon>
            设自选
          </NavItem>
        </BottomRow>
        <HomeBar />
      </Bottom>
    </Page>
  );
}
